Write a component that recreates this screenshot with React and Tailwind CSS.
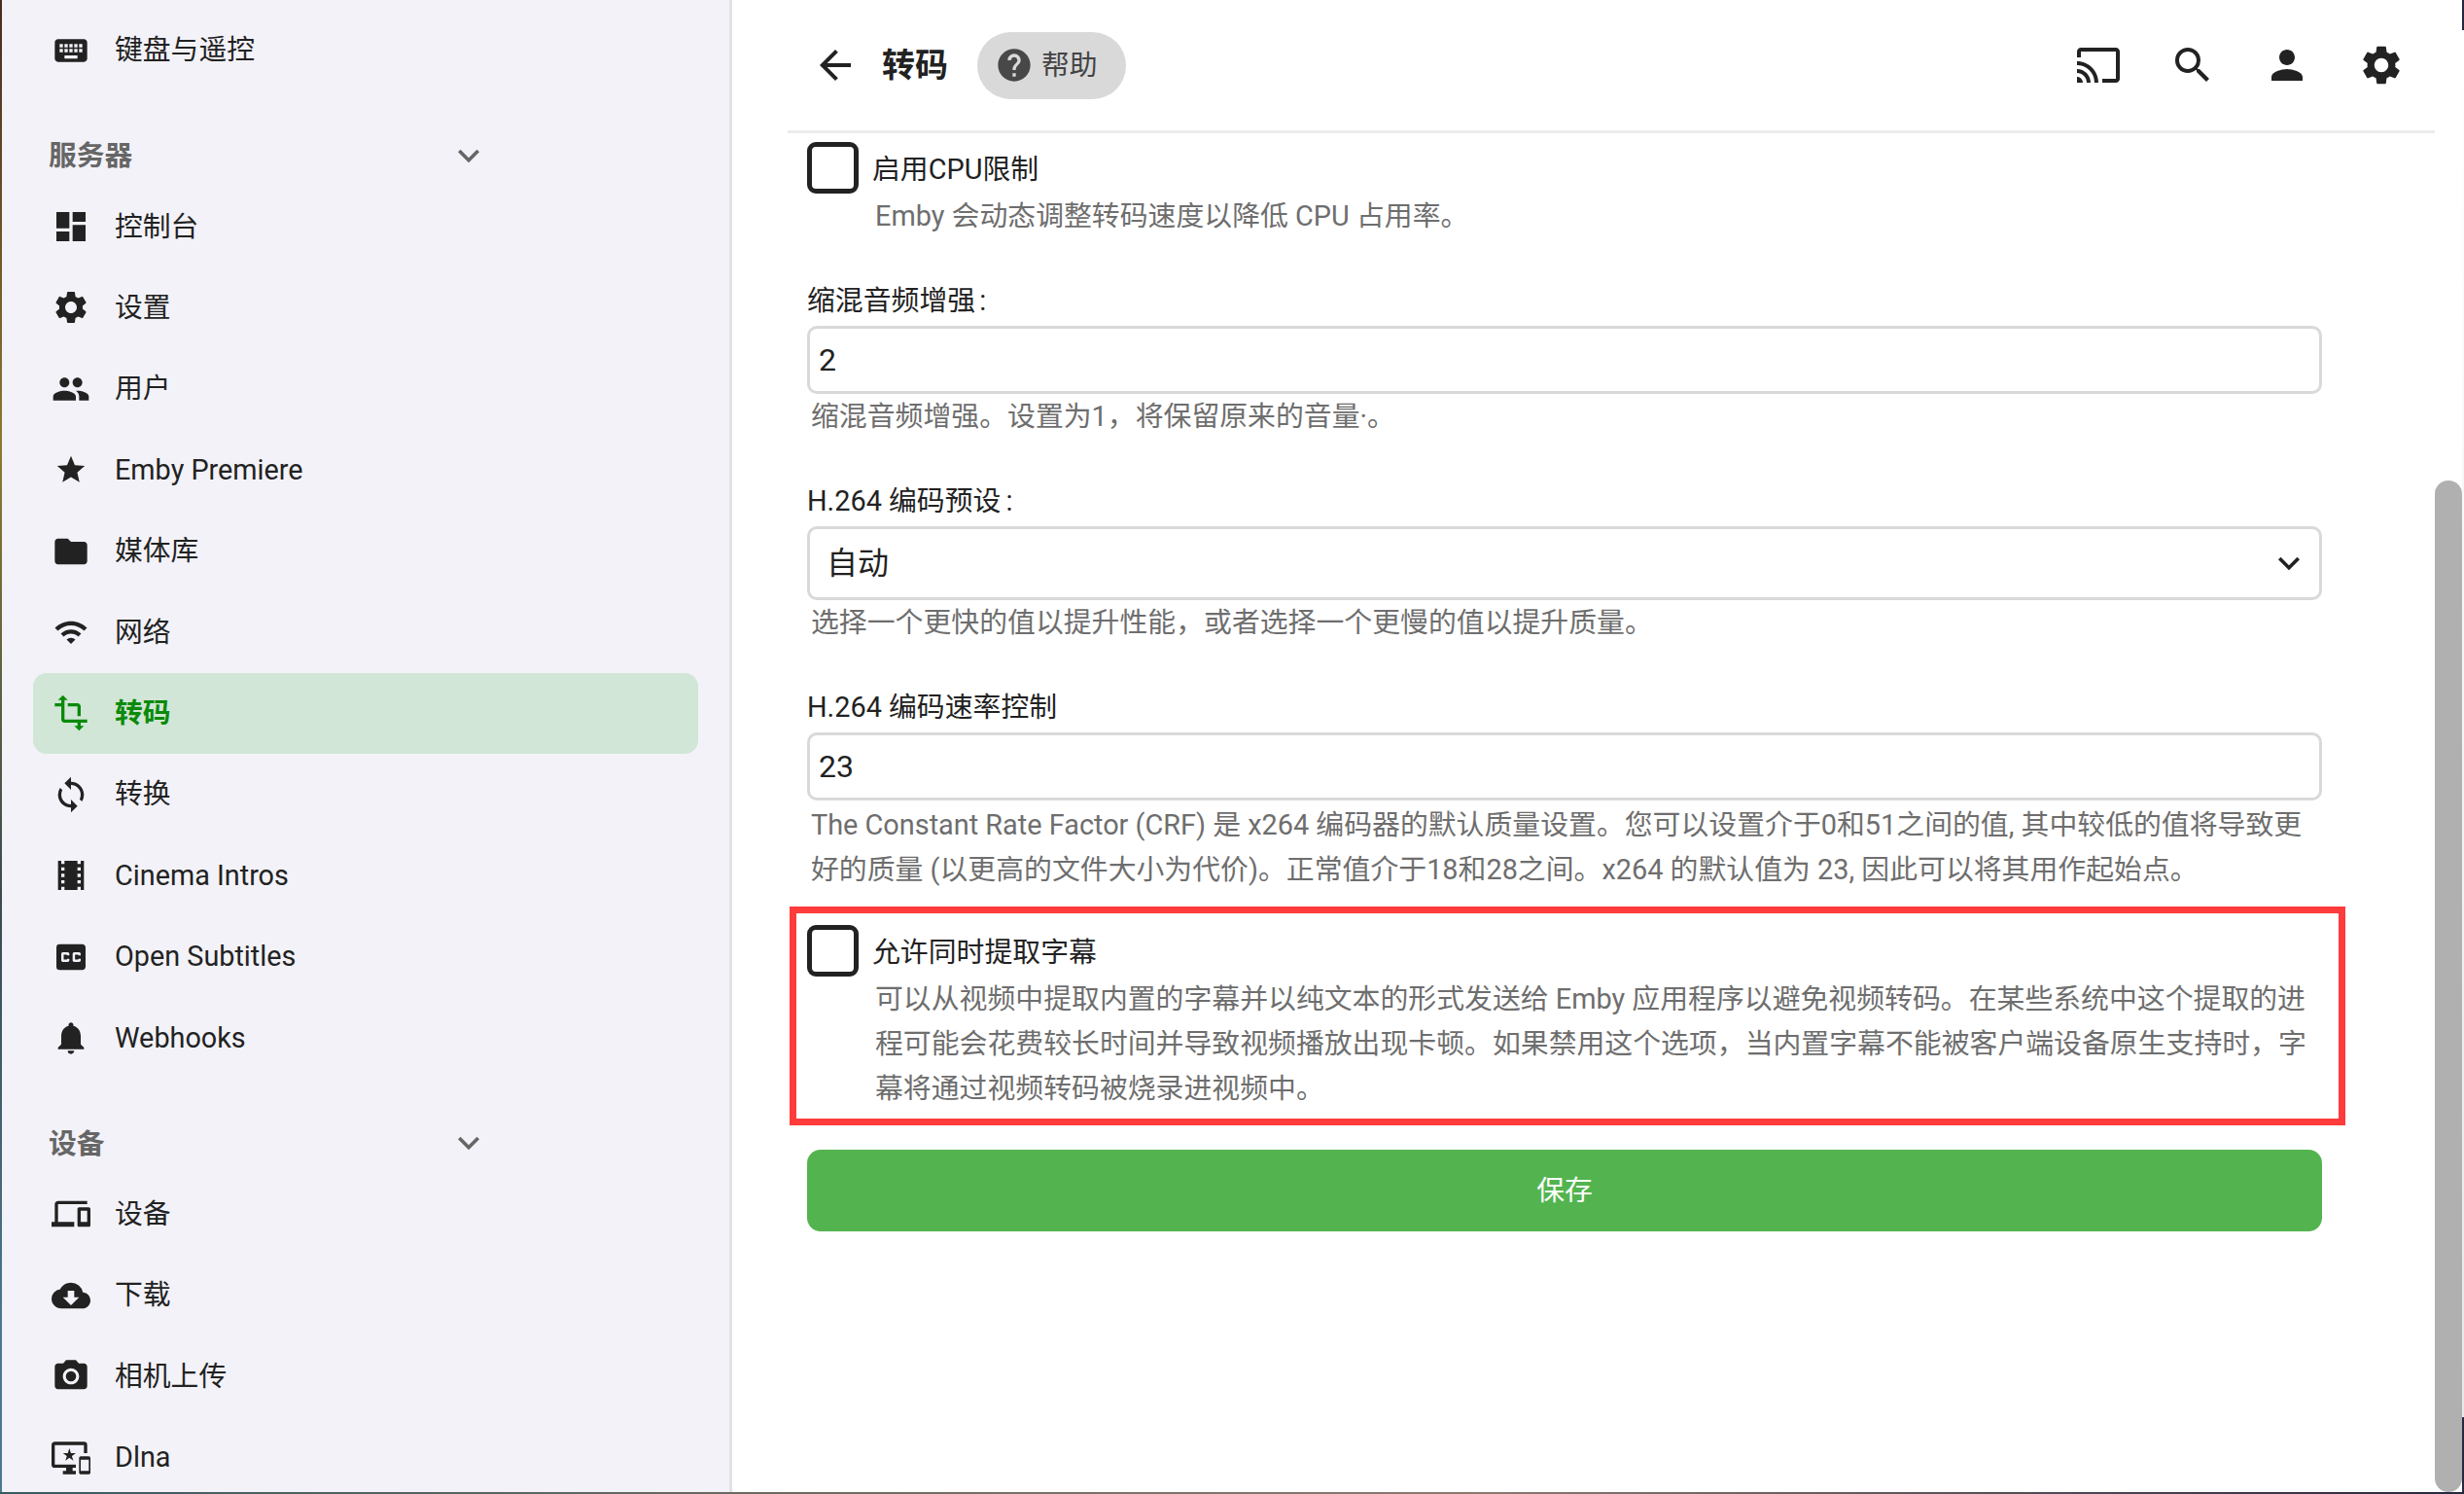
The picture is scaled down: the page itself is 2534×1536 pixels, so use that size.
import React from "react";
import {
  MdKeyboard, MdDashboard, MdSettings, MdPeople, MdStar, MdFolder, MdWifi, MdTransform, MdSync,
  MdLocalMovies, MdClosedCaption, MdNotifications, MdDevices, MdCloudDownload, MdPhotoCamera,
  MdImportantDevices, MdExpandMore, MdArrowBack, MdHelp, MdCast, MdSearch, MdPerson,
} from "react-icons/md";

const font = { fontFamily: 'Roboto, "Noto Sans CJK SC", sans-serif' };

function NavItem({ icon: Icon, label, active, size = "h-[40px] w-[40px]" }) {
  return (
    <div className={`flex h-[83.4px] items-center rounded-[14px] ${active ? "bg-[#d1e6d6] text-[#0a8a0a] font-bold" : "text-[#222222]"}`}>
      <span className="flex w-[84px] shrink-0 items-center">
        <span className="flex w-[78px] justify-center"><Icon className={size} /></span>
      </span>
      <span className="text-[28.8px] leading-none">{label}</span>
    </div>
  );
}

function SectionHeader({ label }) {
  return (
    <div className="flex h-[98px] items-center pt-[35px] text-[#666666]">
      <span className="ml-[16px] w-[410px] pt-[2px] text-[28.8px] font-bold leading-none">{label}</span>
      <MdExpandMore className="h-[44px] w-[44px]" />
    </div>
  );
}

function Sidebar() {
  return (
    <aside className="w-[751px] shrink-0 overflow-hidden border-r-[3px] border-[#e2e1e6] bg-[#f3f2f8] pl-[32px] pr-[32px] pt-[10px]">
      <NavItem icon={MdKeyboard} label="键盘与遥控" />
      <SectionHeader label="服务器" />
      <NavItem icon={MdDashboard} label="控制台" />
      <NavItem icon={MdSettings} label="设置" />
      <NavItem icon={MdPeople} label="用户" />
      <NavItem icon={MdStar} label="Emby Premiere" size="h-[34px] w-[34px]" />
      <NavItem icon={MdFolder} label="媒体库" />
      <NavItem icon={MdWifi} label="网络" size="h-[36px] w-[36px]" />
      <NavItem icon={MdTransform} label="转码" active />
      <NavItem icon={MdSync} label="转换" />
      <NavItem icon={MdLocalMovies} label="Cinema Intros" />
      <NavItem icon={MdClosedCaption} label="Open Subtitles" />
      <NavItem icon={MdNotifications} label="Webhooks" />
      <SectionHeader label="设备" />
      <NavItem icon={MdDevices} label="设备" />
      <NavItem icon={MdCloudDownload} label="下载" />
      <NavItem icon={MdPhotoCamera} label="相机上传" />
      <NavItem icon={MdImportantDevices} label="Dlna" />
    </aside>
  );
}

function TopBar() {
  return (
    <header className="ml-[57px] flex h-[137px] shrink-0 items-center border-b-[3px] border-[#ececec] text-[#222222]">
      <MdArrowBack className="ml-[25px] h-[48px] w-[48px]" />
      <span className="ml-[24px] text-[34px] font-bold leading-none">转码</span>
      <span className="ml-[30px] flex h-[69px] w-[153px] items-center rounded-full bg-[#d9d9d9] pl-[18px] text-[#444444]">
        <MdHelp className="h-[40px] w-[40px] text-[#484848]" />
        <span className="ml-[8px] pt-[1px] text-[28.8px] leading-none">帮助</span>
      </span>
      <div className="ml-auto mr-[7px] flex">
        {[MdCast, MdSearch, MdPerson, MdSettings].map((Icon, i) => (
          <span key={i} className="flex w-[97px] justify-center"><Icon className="h-[48px] w-[48px]" /></span>
        ))}
      </div>
    </header>
  );
}

function CheckRow({ label, children, className = "" }) {
  return (
    <div className={`flex ${className}`}>
      <span className="h-[53px] w-[53px] shrink-0 rounded-[9px] border-[5px] border-[#222222] bg-white" />
      <div className="ml-[14px] min-w-0 flex-1">
        <div className="mt-[13px] text-[28.86px] leading-[30px] text-[#222222]">{label}</div>
        <div className="ml-[3px] mt-[10px] text-[28.86px] leading-[46px] text-[#6e6e6e]">{children}</div>
      </div>
    </div>
  );
}

function Field({ label, children, help, className = "" }) {
  return (
    <div className={className}>
      <div className="text-[28.86px] leading-[34px] text-[#222222]">{label}</div>
      {children}
      <div className="pl-[4px] text-[28.86px] leading-[46.5px] text-[#6e6e6e]">{help}</div>
    </div>
  );
}

function TextBox({ value }) {
  return (
    <div className="mt-[9px] flex h-[70px] items-center rounded-[10px] border-[3.5px] border-[#d9d9d9] bg-white pl-[9px] text-[32px] text-[#222222]">
      {value}
    </div>
  );
}

function Form() {
  return (
    <div className="ml-[77px] mr-[116px] flex-1 pt-[9px]">
      <CheckRow label="启用CPU限制">Emby 会动态调整转码速度以降低 CPU 占用率。</CheckRow>
      <Field className="mt-[47px]" label={<>缩混音频增强<span className="ml-[4px]">:</span></>} help="缩混音频增强。设置为1，将保留原来的音量·。">
        <TextBox value="2" />
      </Field>
      <Field className="mt-[46px]" label={<>H.264 编码预设<span className="ml-[5px]">:</span></>} help="选择一个更快的值以提升性能，或者选择一个更慢的值以提升质量。">
        <div className="mt-[9px] flex h-[76px] items-center justify-between rounded-[10px] border-[3.5px] border-[#d9d9d9] bg-white pl-[17px] pr-[9px] text-[32px] text-[#222222]">
          自动
          <MdExpandMore className="h-[44px] w-[44px]" />
        </div>
      </Field>
      <Field
        className="mt-[47px]"
        label="H.264 编码速率控制"
        help={<div className="pt-[1.5px]">The Constant Rate Factor (CRF) 是 x264 编码器的默认质量设置。您可以设置介于0和51之间的值, 其中较低的值将导致更<br />好的质量 (以更高的文件大小为代价)。正常值介于18和28之间。x264 的默认值为 23, 因此可以将其用作起始点。</div>}
      >
        <TextBox value="23" />
      </Field>
      <div className="-ml-[18px] -mr-[24px] mt-[14.5px] h-[225px] border-[7px] border-[#ff3b3b] pl-[11px] pt-[12px]">
        <CheckRow label="允许同时提取字幕">
          可以从视频中提取内置的字幕并以纯文本的形式发送给 Emby 应用程序以避免视频转码。在某些系统中这个提取的进<br />程可能会花费较长时间并导致视频播放出现卡顿。如果禁用这个选项，当内置字幕不能被客户端设备原生支持时，字<br />幕将通过视频转码被烧录进视频中。
        </CheckRow>
      </div>
      <button className="mt-[25px] flex h-[84px] w-full items-center justify-center rounded-[14px] bg-[#53b44f] pt-[2px] text-[28.8px] text-white">保存</button>
    </div>
  );
}

export default function App() {
  return (
    <div style={font} className="flex h-screen w-screen flex-col overflow-hidden bg-[#26283f]">
      <div className="flex min-h-0 flex-1">
        <div className="w-[2px] shrink-0 bg-[linear-gradient(180deg,#4a2a20,#8a7a30_30%,#3a4a50_60%,#4a7a90_90%)]" />
        <Sidebar />
        <main className="flex min-w-0 flex-1 bg-white">
          <div className="flex min-w-0 flex-1 flex-col">
            <TopBar />
            <Form />
          </div>
          <div className="w-[28px] shrink-0 pt-[494px]">
            <div className="h-full rounded-full bg-[#b0b0b0]" />
          </div>
        </main>
        <div className="w-[2px] shrink-0 bg-[linear-gradient(180deg,#26283f_2%,#ffffff_2%,#e8e8e8_95%,#26283f_95%)]" />
      </div>
      <div className="h-[2px] shrink-0 bg-[linear-gradient(90deg,#3a5a60,#6a6a60_30%,#8a7a70_60%,#26283f)]" />
    </div>
  );
}
